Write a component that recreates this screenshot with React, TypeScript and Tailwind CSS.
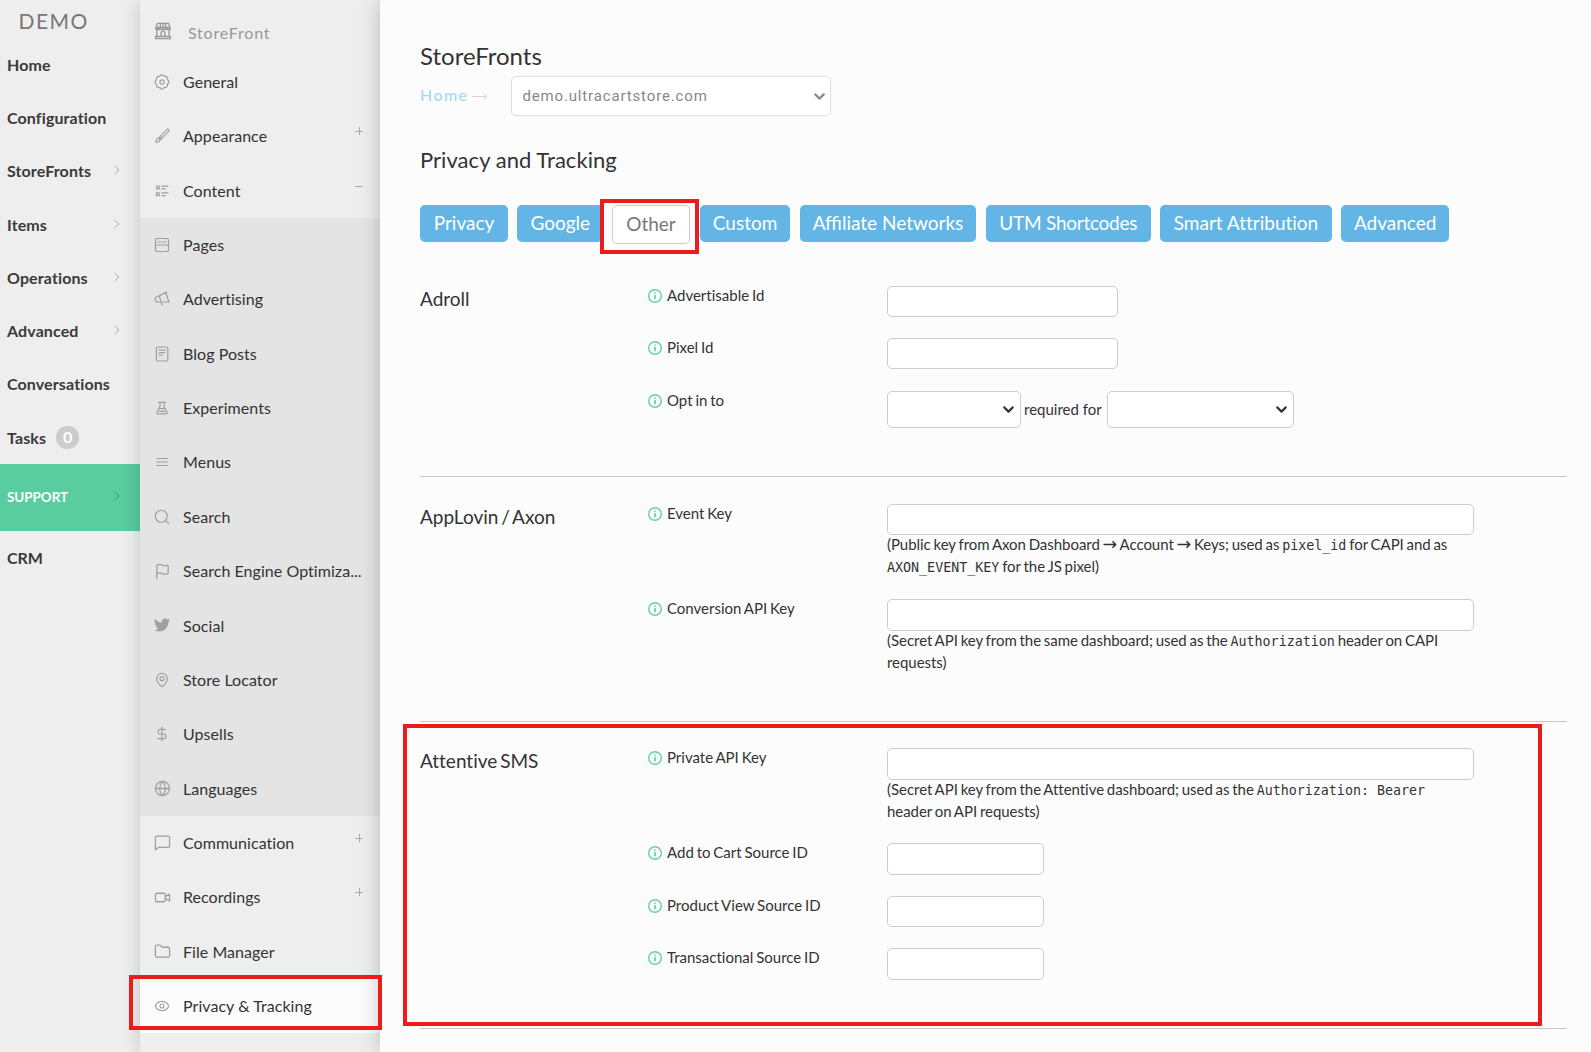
import React from 'react';
import {
  ChevronDown,
  DollarSign,
  Eye,
  Flag,
  Folder,
  Globe,
  MapPin,
  MessageSquare,
  Search,
  Video
} from 'lucide-react';

interface MainItem {
  label: string;
  arrow?: boolean;
  badge?: string;
}

interface StoreItem {
  label: string;
  icon: React.ReactNode;
  toggle?: 'plus' | 'minus';
  active?: boolean;
}

interface FieldProps {
  label: string;
  height: string;
  children: React.ReactNode;
}

const Svg: React.FC<{ children: React.ReactNode; className?: string; strokeWidth?: number }> = ({
  children,
  className = 'w-4 h-4',
  strokeWidth = 1.2
}) => (
  <svg
    viewBox="0 0 16 16"
    className={className}
    fill="none"
    stroke="currentColor"
    strokeWidth={strokeWidth}
    strokeLinecap="round"
    strokeLinejoin="round"
  >
    {children}
  </svg>
);

const StoreIcon = () => (
  <Svg className="w-[18px] h-[18px]" strokeWidth={1.2}>
    <path d="M3 1.2h10l1.4 4.3v1.2h-2.3V5.5M1.6 5.5 3 1.2M1.6 5.5v1.2h2.3V5.5M5.8 1.2 5.3 6.7h-1.4M8 1.2v5.5H5.3M10.2 1.2l.5 5.5H8M10.7 6.7h1.4M1.6 4.9h12.8" />
    <path d="M2.6 6.9v6M13.4 6.9v6M1.4 12.8h13.2v1.9H1.4zM6.3 12.6V10a1.7 1.7 0 0 1 3.4 0v2.6" />
  </Svg>
);

const GearIcon = () => (
  <Svg>
    <circle cx="8" cy="8" r="2.1" />
    <path d="M6.6 1.2Q8 .5 9.4 1.2Q9.8 2.7 11.3 2.2Q12.9 2.4 13.4 4Q12.8 5.7 14.4 6.4Q15.2 8 14.4 9.4Q12.9 10.1 13.5 11.8Q12.8 13.4 11.2 13.6Q9.7 13.1 9.4 14.7Q8 15.4 6.6 14.7Q6.2 13.1 4.7 13.7Q3.1 13.3 2.5 11.8Q3.1 10.1 1.6 9.5Q.8 8 1.6 6.5Q3.1 5.8 2.5 4.1Q3.2 2.5 4.7 2.2Q6.3 2.8 6.6 1.2z" />
  </Svg>
);

const BrushIcon = () => (
  <Svg>
    <path d="M6 8.6 12.6 1.6a1.2 1.2 0 0 1 1.8 1.7L8 10.2zM6 8.6 5 9.8l1.7 1.7L8 10.2" />
    <path d="M5.2 10.5a1.9 1.9 0 0 1-.6 3.2c-1 .5-2.2.5-3 0 .8-.4.6-1.1.8-1.9a1.9 1.9 0 0 1 2.8-1.3z" />
  </Svg>
);

const ListIcon = () => (
  <Svg>
    <path d="M2.5 3.2h2.7v2.7H2.5zM2.5 9.9h2.7v2.7H2.5zM7.8 3.2h6M7.8 5.9h3.4M7.8 9.9h6M7.8 12.6h3.4" />
  </Svg>
);

const PagesIcon = () => (
  <Svg>
    <rect x="1.5" y="1.5" width="13" height="13" rx="1.4" />
    <path d="M1.5 8h13M4.3 5h2M7.6 5h1M10 5h1.7" />
  </Svg>
);

const MegaphoneIcon = () => (
  <Svg>
    <path d="M5.3 4.9 12 1.3 14.7 11 6.7 10.9M5.3 4.9l-2 .6a2.7 2.7 0 0 0 1.5 5.5l1.9-.1M5.3 4.9l2.8 9.3M11.3 1l1.3.2M14.1 11.4l.9-.6" />
  </Svg>
);

const PostIcon = () => (
  <Svg>
    <rect x="2.4" y="1" width="11.4" height="14" rx="1.2" />
    <path d="M5 4.2h6M5 6.6h6M5 9h3.4" />
  </Svg>
);

const FlaskIcon = () => (
  <Svg>
    <path d="M4.4 2.4h7.2M6 2.4v4.2L3 11.8a1.3 1.3 0 0 0 1.1 2h7.8a1.3 1.3 0 0 0 1.1-2L10 6.6V2.4M6 8.7h4M5 11.4h6" />
  </Svg>
);

const MenuIcon = () => (
  <Svg>
    <path d="M3 4.5h10.4M3 8h10.4M3 11.5h10.4" />
  </Svg>
);

const TwitterIcon = () => (
  <svg viewBox="0 0 24 24" className="w-4 h-4 -mt-px" fill="currentColor">
    <path d="M23.95 4.57a10 10 0 0 1-2.82.77 4.96 4.96 0 0 0 2.16-2.72c-.95.55-2 .96-3.13 1.18a4.92 4.92 0 0 0-8.38 4.48A13.93 13.93 0 0 1 1.64 3.16a4.92 4.92 0 0 0 1.52 6.57 4.9 4.9 0 0 1-2.23-.61v.06a4.92 4.92 0 0 0 3.95 4.83 5 5 0 0 1-2.21.08 4.94 4.94 0 0 0 4.6 3.42A9.87 9.87 0 0 1 0 19.54a13.94 13.94 0 0 0 7.55 2.21c9.05 0 14-7.5 14-13.98 0-.21 0-.42-.02-.63a9.94 9.94 0 0 0 2.46-2.55z" />
  </svg>
);

const InfoIcon = () => (
  <svg viewBox="0 0 14 14" className="w-3.5 h-3.5 shrink-0" fill="none" stroke="#62d0a4">
    <circle cx="7" cy="7" r="6.3" strokeWidth="1.4" />
    <path d="M7 3.5v1.3M7 6v4.2" strokeWidth="1.7" />
  </svg>
);

const RightArrow = () => (
  <svg viewBox="0 0 6 10" className="w-1.5 h-2.5" fill="none" stroke="currentColor">
    <path d="M.7 1 5 5 .7 9" />
  </svg>
);

const mainItems: MainItem[] = [
  { label: 'Home' },
  { label: 'Configuration' },
  { label: 'StoreFronts', arrow: true },
  { label: 'Items', arrow: true },
  { label: 'Operations', arrow: true },
  { label: 'Advanced', arrow: true },
  { label: 'Conversations' },
  { label: 'Tasks', badge: '0' }
];

const topItems: StoreItem[] = [
  { label: 'General', icon: <GearIcon /> },
  { label: 'Appearance', icon: <BrushIcon />, toggle: 'plus' },
  { label: 'Content', icon: <ListIcon />, toggle: 'minus' }
];

const contentItems: StoreItem[] = [
  { label: 'Pages', icon: <PagesIcon /> },
  { label: 'Advertising', icon: <MegaphoneIcon /> },
  { label: 'Blog Posts', icon: <PostIcon /> },
  { label: 'Experiments', icon: <FlaskIcon /> },
  { label: 'Menus', icon: <MenuIcon /> },
  { label: 'Search', icon: <Search size={18} strokeWidth={1.6} className="shrink-0" /> },
  { label: 'Search Engine Optimiza...', icon: <Flag size={17} strokeWidth={1.8} className="shrink-0" /> },
  { label: 'Social', icon: <TwitterIcon /> },
  { label: 'Store Locator', icon: <MapPin size={16} strokeWidth={1.8} /> },
  { label: 'Upsells', icon: <DollarSign size={16} strokeWidth={1.8} /> },
  { label: 'Languages', icon: <Globe size={17} strokeWidth={1.8} className="shrink-0" /> }
];

const bottomItems: StoreItem[] = [
  { label: 'Communication', icon: <MessageSquare size={17} strokeWidth={1.8} className="shrink-0" />, toggle: 'plus' },
  { label: 'Recordings', icon: <Video size={17} strokeWidth={1.8} className="shrink-0" />, toggle: 'plus' },
  { label: 'File Manager', icon: <Folder size={17} strokeWidth={1.8} className="shrink-0" /> },
  { label: 'Privacy & Tracking', icon: <Eye size={16} strokeWidth={1.7} />, active: true }
];

const tabs = [
  { label: 'Privacy', width: 'w-[88px]' },
  { label: 'Google', width: 'w-[86px]' },
  { label: 'Other', width: 'w-[78px] -ml-[0.6px] mr-[0.6px]', active: true },
  { label: 'Custom', width: 'w-[90.3px]' },
  { label: 'Affiliate Networks', width: 'w-[176px] ml-[0.5px] [font-variant-ligatures:normal]' },
  { label: 'UTM Shortcodes', width: 'w-[165px] ml-[0.5px] tracking-[-0.25px]' },
  { label: 'Smart Attribution', width: 'w-[171.8px]' },
  { label: 'Advanced', width: 'w-[108px]' }
];

const StoreRow: React.FC<{ item: StoreItem }> = ({ item }) => (
  <div className={`flex items-center h-[54.36px] pb-[0.5px] pl-3.5 pr-4 ${item.active ? 'bg-[#fcfcfc]' : ''}`}>
    <span className="w-4 mr-[13px] flex justify-center shrink-0 text-[#a0a0a0]">{item.icon}</span>
    <span className="flex-1 whitespace-nowrap tracking-[0.05px]">{item.label}</span>
    {item.toggle && (
      <svg viewBox="0 0 10 10" className="w-2.5 h-2.5 -mt-[10px]" stroke="#aaa">
        <path d={item.toggle === 'plus' ? 'M1 5.5h8M5.5 1v8' : 'M1 5.5h8'} />
      </svg>
    )}
  </div>
);

const Input: React.FC<{ width: string; height?: string }> = ({ width, height = 'h-[31px]' }) => (
  <input className={`block rounded-[5px] border border-[#ccc] bg-white ${width} ${height}`} />
);

const Select: React.FC<{ width: string }> = ({ width }) => (
  <div className={`flex items-center justify-end h-[37px] pr-[3px] rounded-[5px] border border-[#ccc] bg-white ${width}`}>
    <ChevronDown size={17} strokeWidth={3} />
  </div>
);

const Field: React.FC<FieldProps> = ({ label, height, children }) => (
  <div className={`flex ${height}`}>
    <div className="flex items-start w-[239px]">
      <span className="mt-[3.2px] mr-[5px]"><InfoIcon /></span>
      <span className="leading-[18px] whitespace-nowrap">{label}</span>
    </div>
    <div>{children}</div>
  </div>
);

const Help: React.FC<{ children: React.ReactNode }> = ({ children }) => (
  <p className="-mt-px leading-[21px] tracking-[-0.04px] whitespace-nowrap">{children}</p>
);

const Code: React.FC<{ children: React.ReactNode }> = ({ children }) => (
  <code className="font-['DejaVu_Sans_Mono',monospace] text-[13.33px] tracking-normal [word-spacing:0]">{children}</code>
);

const Arrow = () => <span className="font-['DejaVu_Sans',sans-serif] text-[17.5px] leading-none">→</span>;

const Section: React.FC<{ title: string; height: string; children: React.ReactNode }> = ({
  title,
  height,
  children
}) => (
  <section className={`flex border-b border-[#c8c8c8] ${height}`}>
    <h3 className="w-[228px] text-[19px] leading-[26px] [word-spacing:-2px]">{title}</h3>
    <div className="[word-spacing:-1px]">{children}</div>
  </section>
);

export default function App() {
  return (
    <div className="relative flex w-[1591px] h-[1052px] overflow-hidden bg-[#fcfcfc] text-[#333] font-['Lato',sans-serif] [font-variant-ligatures:none]">
      <nav className="w-[140px] bg-[#eee] text-base font-bold text-[#3a3a3a]">
        <div className="h-[38px] pl-[18.5px] pt-1.5 text-[21px] leading-[30px] font-normal tracking-[1.5px] text-[#777]">DEMO</div>
        {mainItems.map((item) => (
          <div key={item.label} className="flex items-center h-[53.25px] pt-[0.6px] pl-[7px] tracking-[0.12px]">
            <span>{item.label}</span>
            {item.badge && (
              <span className="ml-2.5 w-[23px] h-[23px] rounded-[11px] bg-[#ccc] text-white text-center leading-[22px]">
                {item.badge}
              </span>
            )}
            {item.arrow && <span className="ml-auto mr-5 -mt-[2px] text-[#aaa]"><RightArrow /></span>}
          </div>
        ))}
        <div className="flex items-center h-[67px] pl-[7px] bg-[#59cca0] text-[13.4px] text-white">
          <span>SUPPORT</span>
          <span className="ml-auto mr-5 -mt-1 text-[#3f9173]"><RightArrow /></span>
        </div>
        <div className="flex items-center h-[53px] pl-[7px]">CRM</div>
      </nav>

      <aside className="relative w-[240px] bg-[#eee] text-base shadow-[0_0_18px_rgba(0,0,0,0.18)]">
        <div className="flex items-start h-[55px] pl-[14px] pt-[22px] text-[#999]">
          <StoreIcon />
          <span className="ml-4 leading-[22px] tracking-[0.8px]">StoreFront</span>
        </div>
        {topItems.map((item) => <StoreRow key={item.label} item={item} />)}
        <div className="bg-[#e4e4e4]">
          {contentItems.map((item) => <StoreRow key={item.label} item={item} />)}
        </div>
        {bottomItems.map((item) => <StoreRow key={item.label} item={item} />)}
      </aside>

      <main className="relative flex-1 pl-10 bg-[#fcfcfc] text-[15px] shadow-[0_0_20px_rgba(0,0,0,0.22)]">
        <h1 className="mt-10 h-9 text-2xl leading-[31px]">StoreFronts</h1>
        <div className="flex items-center h-10 font-['Roboto',sans-serif]">
          <span className="pb-0.5 text-base tracking-[1.4px] text-[#a6d9f4] font-['Lato',sans-serif] font-medium">Home</span>
          <svg viewBox="0 0 16 8" className="w-4 h-2 ml-1" fill="none" stroke="#d4d4d4">
            <path d="M0 4.5h15M11.5 1.5l3.5 3-3.5 3" />
          </svg>
          <div className="flex items-center justify-between ml-[23px] w-80 h-10 pl-2.5 pr-[2px] rounded-[5px] border border-[#ddd] bg-white tracking-[0.85px] text-[#888]">
            demo.ultracartstore.com
            <ChevronDown size={17} strokeWidth={3} />
          </div>
        </div>
        <h2 className="mt-[29px] h-[60px] text-[22px] leading-[30px] tracking-[0.05px]">Privacy and Tracking</h2>
        <div className="flex gap-[9.3px] h-[81px] items-start text-[19px]">
          {tabs.map((tab) => (
            <button
              key={tab.label}
              className={`pb-px rounded-[5px] whitespace-nowrap ${tab.width} ${
                tab.active
                  ? 'h-[39px] border border-[#ccc] bg-white text-[#777]'
                  : 'h-[37px] bg-[#62b5e5] text-white'
              }`}
            >
              {tab.label}
            </button>
          ))}
        </div>

        <div className="w-[1147px]">
          <Section title="Adroll" height="h-[191px]">
            <Field label="Advertisable Id" height="h-[52px]"><Input width="w-[231px]" /></Field>
            <Field label="Pixel Id" height="h-[53px]"><Input width="w-[231px]" /></Field>
            <Field label="Opt in to" height="h-[37px]">
              <div className="flex items-center">
                <Select width="w-[134px]" />
                <span className="ml-[3px] w-[83px] [word-spacing:0]">required for</span>
                <Select width="w-[187px]" />
              </div>
            </Field>
          </Section>
          <div className="h-[27px]" />
          <Section title="AppLovin / Axon" height="h-[218px]">
            <Field label="Event Key" height="h-[95px]">
              <Input width="w-[587px]" />
              <Help>
                (Public key from Axon Dashboard <Arrow /> Account <Arrow /> Keys; used as <Code>pixel_id</Code> for CAPI and as<br />
                <Code>AXON_EVENT_KEY</Code> for the JS pixel)
              </Help>
            </Field>
            <Field label="Conversion API Key" height="h-[95px]">
              <Input width="w-[587px]" height="h-8" />
              <Help>
                (Secret API key from the same dashboard; used as the <Code>Authorization</Code> header on CAPI<br />
                requests)
              </Help>
            </Field>
          </Section>
          <div className="h-[26px]" />
          <Section title="Attentive SMS" height="h-[281px]">
            <Field label="Private API Key" height="h-[95px]">
              <Input width="w-[587px]" height="h-8" />
              <Help>
                (Secret API key from the Attentive dashboard; used as the <Code>Authorization: Bearer</Code><br />
                header on API requests)
              </Help>
            </Field>
            <Field label="Add to Cart Source ID" height="h-[53px]"><Input width="w-[157px]" height="h-8" /></Field>
            <Field label="Product View Source ID" height="h-[52px]"><Input width="w-[157px]" /></Field>
            <Field label="Transactional Source ID" height="h-8"><Input width="w-[157px]" height="h-8" /></Field>
          </Section>
        </div>
      </main>

      {/* callout frames */}
      <div className="absolute left-[129px] top-[975px] w-[253px] h-[55px] border-4 border-[#ea1c1c]" />
      <div className="absolute left-[600px] top-[199px] w-[99px] h-[55px] border-4 border-[#ea1c1c]" />
      <div className="absolute left-[403px] top-[724px] w-[1139px] h-[302px] border-4 border-[#ea1c1c]" />
    </div>
  );
}
